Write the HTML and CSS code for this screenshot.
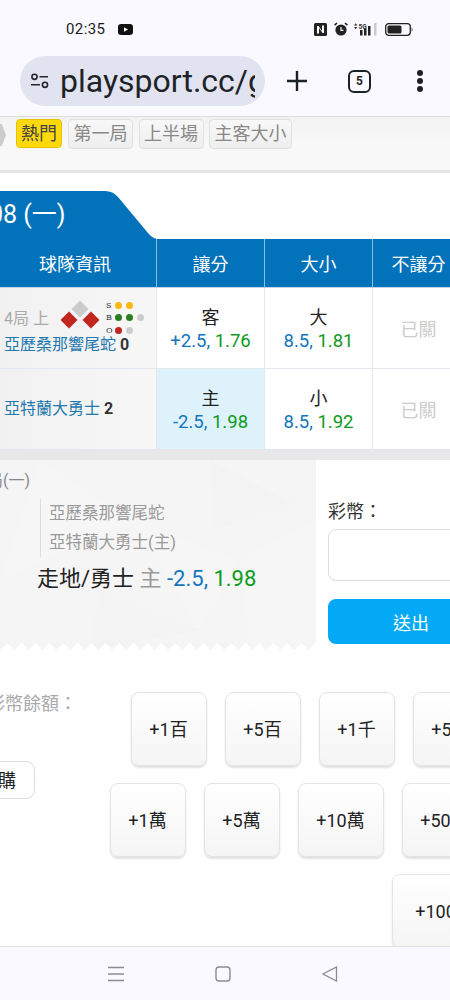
FILE: index.html
```html
<!DOCTYPE html>
<html lang="zh-Hant">
<head>
  <meta charset="UTF-8">
  <meta name="viewport" content="width=device-width, initial-scale=1.0">
  <title>playsport.cc</title>
  <link rel="stylesheet" href="styles.css">
</head>
<body>
  <!-- Phone status bar -->
  <div class="status-bar">
    <span class="clock">02:35</span>
    <svg class="yt-icon" width="15" height="11" viewBox="0 0 15 11"><rect width="15" height="11" rx="3.2" fill="#111"/><path d="M6 3.2v4.6l4-2.3z" fill="#fff"/></svg>
    <div class="status-icons">
      <svg width="13" height="13" viewBox="0 0 13 13"><rect width="13" height="13" rx="1.5" fill="#222"/><path d="M3 10.5V3h1.6l3.4 5V2.5h2V10H8.6L5 5v5.5z" fill="#fff"/></svg>
      <svg width="14" height="14" viewBox="0 0 14 14"><circle cx="7" cy="8" r="5.6" fill="#222"/><path d="M7 5v3.3h2.4" stroke="#fff" stroke-width="1.2" fill="none"/><path d="M.6 3.2 3 1M13.4 3.2 11 1" stroke="#222" stroke-width="1.6"/></svg>
      <svg class="signal" width="25" height="14" viewBox="0 0 25 14"><path d="M1 3.4l1.7-2.2 1.7 2.2zM1 5l1.7 2.2L4.4 5z" fill="#333"/><text x="5.5" y="6.5" class="five-g">5G</text><rect x="7" y="8" width="2.5" height="5.5" fill="#222"/><rect x="11" y="6.5" width="2.5" height="7" fill="#222"/><rect x="15" y="4" width="2.5" height="9.5" fill="#222"/><rect x="21" y="1" width="2.5" height="12.5" fill="#ccc"/></svg>
      <svg width="28" height="13" viewBox="0 0 28 13"><rect x=".7" y=".7" width="24.6" height="11.6" rx="3" fill="none" stroke="#222" stroke-width="1.3"/><rect x="2.5" y="2.5" width="14" height="8" rx="1.5" fill="#222"/><path d="M26.7 4.5c1 .3 1 3.7 0 4z" fill="#222"/></svg>
    </div>
  </div>

  <!-- Browser toolbar -->
  <div class="toolbar">
    <div class="url-pill">
      <svg width="20" height="16" viewBox="0 0 20 16" fill="none" stroke="#23262b" stroke-width="1.6"><circle cx="4.5" cy="3.8" r="2.6"/><path d="M9.5 3.8H18M1 11.8h9"/><circle cx="15" cy="11.8" r="2.6"/></svg>
      <span class="url-text">playsport.cc/g</span>
    </div>
    <svg class="plus-icon" width="22" height="22" viewBox="0 0 22 22"><path d="M11 1v20M1 11h20" stroke="#1d2025" stroke-width="2.4"/></svg>
    <div class="tab-count">5</div>
    <svg class="more-icon" width="8" height="22" viewBox="0 0 8 22" fill="#1d2025"><circle cx="4" cy="3" r="3"/><circle cx="4" cy="11" r="3"/><circle cx="4" cy="19" r="3"/></svg>
  </div>

  <div class="main">
    <div class="filter-row">
      <span class="filter-arrow"></span>
      <span class="chip chip-hot">熱門</span>
      <span class="chip">第一局</span>
      <span class="chip">上半場</span>
      <span class="chip">主客大小</span>
    </div>
    <div class="separator"></div>

    <div class="title-row">
      <div class="game-tab"><span>08 (一)</span></div>
    </div>

    <div class="odds-table">
      <div class="th th-team">球隊資訊</div>
      <div class="th">讓分</div>
      <div class="th">大小</div>
      <div class="th">不讓分</div>

      <div class="td team-cell">
        <div class="inning-line">
          <span class="inning">4局 上</span>
          <svg class="bases" width="40" height="32" viewBox="0 0 40 32">
            <path d="M20 2.5l8.5 8.5-8.5 8.5-8.5-8.500z" fill="#ccc"/>
            <path d="M9 13.5l8.5 8.5-8.5 8.5-8.5-8.500z" fill="#c0261e"/>
            <path d="M31 13.5l8.5 8.5-8.5 8.5-8.500-8.500z" fill="#c0261e"/>
          </svg>
          <div class="sbo">
            <div class="sbo-row"><i>S</i><b class="dot yellow"></b><b class="dot yellow"></b></div>
            <div class="sbo-row"><i>B</i><b class="dot green"></b><b class="dot green"></b><b class="dot off"></b></div>
            <div class="sbo-row"><i>O</i><b class="dot red"></b><b class="dot off"></b></div>
          </div>
        </div>
        <div class="team">亞歷桑那響尾蛇 <strong>0</strong></div>
      </div>
      <div class="td odds">
        <div class="pick">客</div>
        <div class="nums"><span class="blue">+2.5,</span> <span class="green-text">1.76</span></div>
      </div>
      <div class="td odds">
        <div class="pick">大</div>
        <div class="nums"><span class="blue">8.5,</span> <span class="green-text">1.81</span></div>
      </div>
      <div class="td closed">已關</div>

      <div class="td team-cell team-only">
        <div class="team">亞特蘭大勇士 <strong>2</strong></div>
      </div>
      <div class="td odds selected">
        <div class="pick">主</div>
        <div class="nums"><span class="blue">-2.5,</span> <span class="green-text">1.98</span></div>
      </div>
      <div class="td odds">
        <div class="pick">小</div>
        <div class="nums"><span class="blue">8.5,</span> <span class="green-text">1.92</span></div>
      </div>
      <div class="td closed">已關</div>
    </div>
    <div class="separator thick"></div>

    <div class="bet-panel">
      <div class="slip">
        <div class="slip-game">局(一)</div>
        <div class="slip-teams">
          <div>亞歷桑那響尾蛇</div>
          <div>亞特蘭大勇士(主)</div>
        </div>
        <div class="slip-line">走地/勇士 <span class="side">主</span> <span class="blue">-2.5,</span> <span class="green-text">1.98</span></div>
        <div class="zigzag"></div>
      </div>
      <div class="stake">
        <span class="scroll-tab"></span>
        <label class="stake-label" for="coins">彩幣：</label>
        <input class="stake-input" id="coins" type="text">
        <button class="submit-btn">送出</button>
      </div>
    </div>

    <div class="wallet">
      <div class="wallet-left">
        <div class="balance">彩幣餘額：</div>
        <button class="buy-btn">購</button>
      </div>
      <div class="amounts">
        <div class="amount-row row-a">
          <button class="amount">+1百</button>
          <button class="amount">+5百</button>
          <button class="amount">+1千</button>
          <button class="amount">+5千</button>
        </div>
        <div class="amount-row row-b">
          <button class="amount">+1萬</button>
          <button class="amount">+5萬</button>
          <button class="amount wide">+10萬</button>
          <button class="amount wide">+50萬</button>
        </div>
        <div class="amount-row row-c">
          <button class="amount wide">+100萬</button>
        </div>
      </div>
    </div>
  </div>

  <!-- Android navigation bar -->
  <div class="nav-bar">
    <svg width="16" height="16" viewBox="0 0 16 16" stroke="#8b8d92" stroke-width="1.3"><path d="M0 1.5h16M0 8h16M0 14.5h16"/></svg>
    <svg width="16" height="16" viewBox="0 0 16 16" fill="none" stroke="#8b8d92" stroke-width="1.4"><rect x="1" y="1" width="14" height="14" rx="3"/></svg>
    <svg width="16" height="16" viewBox="0 0 16 16" fill="none" stroke="#8b8d92" stroke-width="1.3"><path d="M14.5 1v14L1 8z"/></svg>
  </div>
</body>
</html>
```

FILE: styles.css
```css
* {
  box-sizing: border-box;
}

body {
  margin: 0;
  width: 450px;
  height: 1000px;
  overflow: hidden;
  display: flex;
  flex-direction: column;
  background-color: #fff;
  color: #222;
  font-family: Roboto, "Noto Sans CJK TC", sans-serif;
}

button, input {
  font-family: inherit;
}

/* Status bar */
.status-bar {
  height: 56px;
  flex-shrink: 0;
  display: flex;
  align-items: center;
  padding: 2px 0 0 66px;
  background-color: #f9f9ff;
}

.clock {
  font-size: 15px;
  letter-spacing: 0.4px;
  color: #1c1c1c;
}

.yt-icon {
  margin-left: 13px;
}

.status-icons {
  margin-left: auto;
  margin-right: 37px;
  display: flex;
  align-items: center;
  gap: 7px;
}

.signal {
  margin-left: -2px;
}

.five-g {
  font-size: 6.5px;
  font-weight: 700;
  fill: #333;
}

/* Browser toolbar */
.toolbar {
  height: 60px;
  flex-shrink: 0;
  display: flex;
  align-items: flex-start;
  background-color: #f9f9ff;
  padding-left: 20px;
}

.url-pill {
  width: 245px;
  height: 50px;
  display: flex;
  align-items: center;
  gap: 10px;
  padding-left: 10px;
  padding-right: 10px;
  border-radius: 25px;
  background-color: #e1e4f0;
  overflow: hidden;
}

.url-pill svg {
  flex-shrink: 0;
}

.url-text {
  font-size: 32px;
  line-height: 50px;
  color: #1f2328;
  white-space: nowrap;
  overflow: hidden;
}

.plus-icon {
  margin: 14px 0 0 21px;
}

.tab-count {
  width: 23px;
  height: 23px;
  margin: 14px 0 0 40px;
  border: 2.5px solid #1d2025;
  border-radius: 6px;
  font-size: 12px;
  font-weight: 700;
  line-height: 18px;
  text-align: center;
}

.more-icon {
  margin: 14px 0 0 45px;
}

/* Page */
.main {
  flex: 1;
  min-height: 0;
  overflow: hidden;
}

.filter-row {
  height: 54px;
  display: flex;
  align-items: flex-start;
  gap: 6px;
  padding-top: 2px;
  border-top: 1px solid #ddd;
  background: linear-gradient(#f2f2f2, #f8f8f8 50%, #f8f8f8);
}

.filter-arrow {
  width: 6px;
  height: 22px;
  margin: 5px 4px 0 0;
  background-color: #ccc;
  clip-path: polygon(0 0, 30% 0, 100% 50%, 30% 100%, 0 100%);
}

.chip {
  height: 30px;
  padding: 0 4.5px;
  border: 1px solid #e0e0e0;
  border-radius: 4px;
  background: linear-gradient(#f8f8f8, #eee);
  color: #888;
  font-size: 18px;
  line-height: 28px;
}

.chip + .chip + .chip {
  margin-left: -0.5px;
}

.chip-hot {
  height: 29px;
  padding: 0 4px;
  width: 46px;
  text-align: center;
  background: #ffd90a;
  border-color: #e6c200;
  color: #444;
}

.separator {
  height: 3px;
  background-color: #e6e6e6;
}

.separator.thick {
  height: 10px;
  background-color: #e8e8e8;
}

.title-row {
  padding-top: 18px;
  background-color: #fff;
}

.game-tab {
  width: 157px;
  height: 48px;
  background-color: #0272bb;
  clip-path: path("M0 0H105Q113 0 118 6L148 42Q152 47 157 48H0Z");
  color: #fff;
  font-size: 25px;
  line-height: 47px;
  white-space: nowrap;
}

.game-tab span {
  margin-left: -11px;
}

/* Odds table */
.odds-table {
  width: 464px;
  display: grid;
  grid-template-columns: 157px 108px 108px 1fr;
  grid-template-rows: 49px 81px 81px;
}

.th {
  display: flex;
  align-items: center;
  justify-content: center;
  background-color: #0272bb;
  border-right: 1px solid #8dbcdd;
  border-bottom: 1px solid #bcd6e8;
  color: #fff;
  font-size: 18px;
}

.th-team {
  padding-right: 6px;
}

.th:nth-child(4) {
  border-right: 0;
}

.td {
  border-right: 1px solid #e3e8ee;
  border-bottom: 1px solid #e3e8ee;
  background-color: #fff;
}

.td:nth-child(4n) {
  border-right: 0;
}

.team-cell {
  padding-left: 4px;
  background: linear-gradient(90deg, #f1f1f1, #f7f7f7);
}

.team-only {
  display: flex;
  align-items: center;
}

.inning-line {
  display: flex;
  align-items: flex-start;
  height: 46px;
}

.inning {
  width: 56px;
  margin-top: 17px;
  color: #aaa;
  font-size: 16px;
  white-space: nowrap;
}

.bases {
  flex-shrink: 0;
  margin-top: 10px;
}

.sbo {
  margin: 11px 0 0 6px;
}

.sbo-row {
  display: flex;
  align-items: center;
  gap: 4px;
  height: 12.5px;
}

.sbo-row i {
  width: 6px;
  margin-right: -1.5px;
  font-family: "DejaVu Serif", serif;
  font-size: 8px;
  font-style: normal;
  color: #333;
}

.dot {
  width: 7px;
  height: 7px;
  border-radius: 50%;
}

.yellow { background-color: #fdb813; }
.green { background-color: #2a7d1e; }
.red { background-color: #c0261e; }
.off { background-color: #ccc; }

.team {
  color: #1f78ae;
  font-size: 16px;
  line-height: 22px;
  white-space: nowrap;
}

.team strong {
  color: #333;
  font-weight: 700;
}

.odds {
  display: flex;
  flex-direction: column;
  align-items: center;
  justify-content: center;
  padding-top: 2px;
}

.pick {
  font-size: 18px;
  line-height: 24px;
  color: #222;
}

.nums {
  font-size: 18.5px;
  line-height: 23px;
  white-space: nowrap;
}

.blue {
  color: #1276bc;
}

.green-text {
  color: #0c9b1c;
}

.selected {
  background-color: #def2fc;
}

.closed {
  display: flex;
  align-items: center;
  justify-content: center;
  color: #ccc;
  font-size: 18px;
}

/* Bet slip */
.bet-panel {
  display: flex;
  height: 190px;
  background-color: #fff;
}

.slip {
  position: relative;
  width: 316px;
  flex-shrink: 0;
  padding-top: 10px;
  background-color: #f5f5f5;
  background-image: url("data:image/svg+xml,%3Csvg xmlns='http://www.w3.org/2000/svg' width='316' height='190'%3E%3Cpath d='M40 0L130 60 0 120z' fill='%23f6f6f6'/%3E%3Cpath d='M210 0L295 45 215 70z' fill='%23f3f3f3'/%3E%3Cpath d='M130 60L240 100 200 170z' fill='%23f6f6f6'/%3E%3Cpath d='M100 130L200 170 90 190z' fill='%23f3f3f3'/%3E%3Cpath d='M240 100L316 60V190H250z' fill='%23f6f6f6'/%3E%3C/svg%3E");
}

.slip-game {
  margin-left: -13px;
  color: #888;
  font-size: 16px;
  line-height: 22px;
}

.slip-teams {
  margin: 7px 0 0 40px;
  padding-left: 8px;
  border-left: 1px solid #ddd;
  color: #999;
  font-size: 16.5px;
  line-height: 29px;
}

.slip-line {
  margin: 5px 0 0 37px;
  color: #222;
  font-size: 22px;
  line-height: 34px;
  white-space: nowrap;
}

.side {
  color: #999;
}

.zigzag {
  position: absolute;
  left: 0;
  right: 0;
  bottom: 0;
  height: 7px;
  background: conic-gradient(from 135deg at 50% 0, #fff 90deg, transparent 0) 0 0 / 14px 7px repeat-x;
}

.stake {
  position: relative;
  flex: 1;
  padding: 40px 0 0 12px;
}

.scroll-tab {
  position: absolute;
  top: 0;
  right: 0;
  width: 4px;
  height: 38px;
  border-radius: 0 0 0 4px;
  background-color: #ddd;
}

.stake-label {
  display: block;
  font-size: 18px;
  line-height: 24px;
  color: #333;
}

.stake-input {
  display: block;
  width: 166px;
  height: 52px;
  margin-top: 5px;
  border: 1px solid #ddd;
  border-radius: 8px;
  background-color: #fff;
}

.submit-btn {
  display: block;
  width: 166px;
  height: 45px;
  margin-top: 18px;
  border: none;
  border-radius: 8px;
  background-color: #03a9f4;
  color: #fff;
  font-size: 18px;
}

/* Wallet and quick amounts */
.wallet {
  display: flex;
}

.wallet-left {
  width: 90px;
  flex-shrink: 0;
  margin-left: -5px;
  padding-top: 42px;
  margin-right: 15px;
}

.balance {
  width: 95px;
  margin-left: -8px;
  color: #aaa;
  font-size: 18px;
  line-height: 24px;
  white-space: nowrap;
}

.buy-btn {
  display: block;
  width: 72px;
  height: 38px;
  margin: 45px 0 0 -32px;
  padding: 0 18px 3px 0;
  border: 1px solid #ddd;
  border-radius: 9px;
  background-color: #fff;
  color: #222;
  font-size: 18px;
  text-align: right;
}

.amounts {
  padding-top: 42px;
  display: flex;
  flex-direction: column;
  gap: 17px;
}

.amount-row {
  display: flex;
  gap: 18px;
}

.row-a { padding-left: 31px; }
.row-b { padding-left: 10px; }
.row-c { padding-left: 292px; }

.amount {
  flex-shrink: 0;
  width: 76px;
  height: 74px;
  padding: 0 1px 3px 0;
  border: 1px solid #e4e4e4;
  border-radius: 8px;
  background: linear-gradient(#fff, #f5f5f5);
  box-shadow: 0 2px 2px rgba(0, 0, 0, 0.12);
  color: #222;
  font-size: 18px;
  white-space: nowrap;
}

.amount.wide {
  width: 86px;
}

.row-c .amount {
  width: 106px;
}

/* Navigation bar */
.nav-bar {
  height: 54px;
  flex-shrink: 0;
  display: flex;
  justify-content: center;
  align-items: center;
  gap: 91px;
  padding: 0 5px 0 0;
  border-top: 1px solid #e0e0e4;
  background-color: #f9f9ff;
}
```
